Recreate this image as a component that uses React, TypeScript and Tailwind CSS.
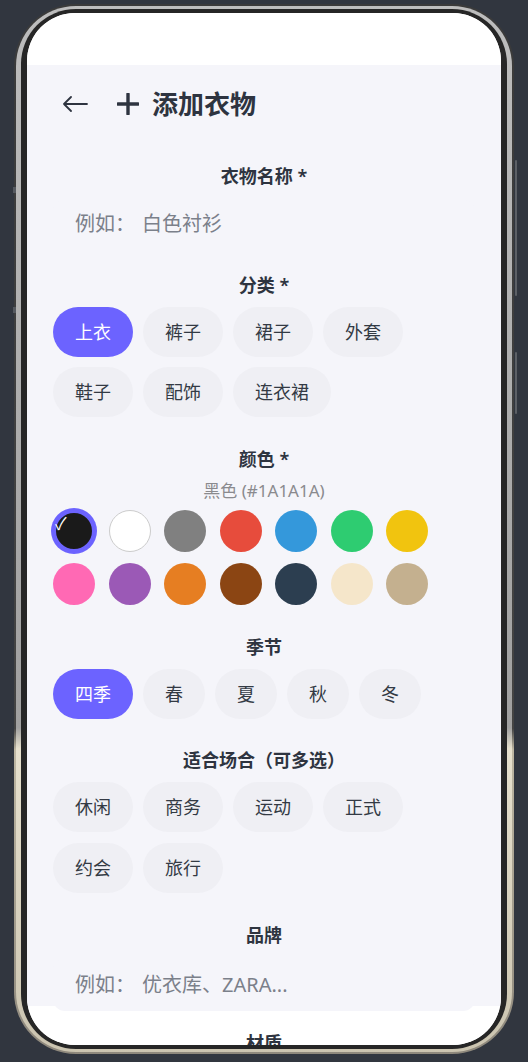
import { useState } from "react";

const CATEGORIES = ["上衣", "裤子", "裙子", "外套", "鞋子", "配饰", "连衣裙"];
const SEASONS = ["四季", "春", "夏", "秋", "冬"];
const OCCASIONS = ["休闲", "商务", "运动", "正式", "约会", "旅行"];

const COLORS = [
  { name: "黑色", hex: "#1A1A1A" },
  { name: "白色", hex: "#FFFFFF" },
  { name: "灰色", hex: "#808080" },
  { name: "红色", hex: "#E74C3C" },
  { name: "蓝色", hex: "#3498DB" },
  { name: "绿色", hex: "#2ECC71" },
  { name: "黄色", hex: "#F1C40F" },
  { name: "粉色", hex: "#FF69B4" },
  { name: "紫色", hex: "#9B59B6" },
  { name: "橙色", hex: "#E67E22" },
  { name: "棕色", hex: "#8B4513" },
  { name: "藏青", hex: "#2C3E50" },
  { name: "米色", hex: "#F5E6CA" },
  { name: "卡其", hex: "#C4B08F" },
];

function Chip({
  label,
  active,
  onClick,
}: {
  label: string;
  active: boolean;
  onClick: () => void;
}) {
  return (
    <button
      type="button"
      onClick={onClick}
      className={`h-[50px] px-[22px] rounded-full text-[18px] leading-[24px] ${
        active ? "bg-[#6c63ff] text-white" : "bg-[#efeff4] text-[#333a44]"
      }`}
    >
      {label}
    </button>
  );
}

function Label({ children, className = "" }: { children: React.ReactNode; className?: string }) {
  return (
    <div
      className={`h-[24px] text-center text-[18px] leading-[24px] font-semibold text-[#2e3440] ${className}`}
    >
      {children}
    </div>
  );
}

function Placeholder({ prefix, rest, className = "" }: { prefix: string; rest: string; className?: string }) {
  return (
    <div
      className={`flex items-center rounded-[12px] bg-[#f5f5fa] px-[22px] text-[20px] text-[#7b808a] ${className}`}
    >
      {prefix}
      <span className="mr-[7px]">：</span>
      {rest}
    </div>
  );
}

export default function App() {
  const [category, setCategory] = useState("上衣");
  const [season, setSeason] = useState("四季");
  const [occasions, setOccasions] = useState<string[]>([]);
  const [color, setColor] = useState(COLORS[0]);

  const toggleOccasion = (o: string) => {
    setOccasions((prev) =>
      prev.includes(o) ? prev.filter((x) => x !== o) : [...prev, o]
    );
  };

  return (
    <div className="relative min-h-[1062px] bg-[#31363f] pt-[4px] font-['Noto_Sans','Noto_Sans_CJK_SC',sans-serif]">
      <div className="relative mx-auto w-[500px]">
        {/* side buttons */}
        <div className="absolute -left-[1px] top-[183px] h-[6px] w-[3px] bg-[#55595f]" />
        <div className="absolute -left-[1px] top-[303px] h-[6px] w-[3px] bg-[#55595f]" />
        <div className="absolute -right-[3px] top-[156px] h-[136px] w-[2px] rounded-full bg-[#5c6066]" />
        <div className="absolute -right-[3px] top-[348px] h-[62px] w-[2px] rounded-full bg-[#5c6066]" />

        <div className="h-[1050px] rounded-[62px] bg-[linear-gradient(to_bottom,#3a3a3a_0%,#444444_69%,#bdb6a2_71%,#8e887c_100%)] p-[2px]">
          <div className="h-full rounded-[60px] bg-[linear-gradient(to_bottom,#bdbdbd_0%,#a0a0a0_69%,#e6e0cd_71%,#cbc4b0_100%)] px-[5px] py-[3px]">
            <div className="h-full rounded-[55px] bg-[#262626] px-[6px] py-[4px]">
              <div className="flex h-full flex-col overflow-hidden rounded-[48px] bg-white">
                {/* status bar */}
                <div className="h-[52px] shrink-0 bg-white" />

                <div className="bg-[#f5f5fa] px-[26px]">
                  {/* header */}
                  <div className="flex h-[78px] items-center">
                    <svg width="26" height="16" viewBox="0 0 26 16" className="ml-[9px]">
                      <path
                        d="M25 8H2M9 1L2 8l7 7"
                        fill="none"
                        stroke="#2e3440"
                        strokeWidth="1.8"
                        strokeLinecap="round"
                        strokeLinejoin="round"
                      />
                    </svg>
                    <svg width="22" height="22" viewBox="0 0 22 22" className="ml-[29px]">
                      <path
                        d="M11 1v20M1 11h20"
                        stroke="#2e3440"
                        strokeWidth="3.4"
                        strokeLinecap="round"
                      />
                    </svg>
                    <h1 className="ml-[13px] text-[26px] leading-[32px] font-bold text-[#2e3440]">
                      添加衣物
                    </h1>
                  </div>

                  <Label className="mt-[21px]">衣物名称 *</Label>
                  <Placeholder prefix="例如" rest="白色衬衫" className="mt-[12px] h-[48px]" />

                  <Label className="mt-[25px]">分类 *</Label>
                  <div className="mt-[10px] flex flex-wrap gap-[10px]">
                    {CATEGORIES.map((c) => (
                      <Chip key={c} label={c} active={category === c} onClick={() => setCategory(c)} />
                    ))}
                  </div>

                  <Label className="mt-[30px]">颜色 *</Label>
                  <div className="mt-[10px] h-[20px] text-center text-[17px] leading-[20px] text-[#8a8a8e]">
                    {color.name} ({color.hex})
                  </div>
                  <div className="mt-[9px] flex w-[385px] flex-wrap gap-x-[13.5px] gap-y-[11px]">
                    {COLORS.map((c) => {
                      const selected = c.hex === color.hex;
                      return (
                        <button
                          type="button"
                          key={c.hex}
                          onClick={() => setColor(c)}
                          className={`relative h-[42px] w-[42px] rounded-full ${
                            selected
                              ? "border-[3px] border-[#6c63ff] ring-[2px] ring-[#6c63ff]"
                              : c.hex === "#FFFFFF"
                                ? "border border-[#cccccc]"
                                : ""
                          }`}
                          style={{ backgroundColor: c.hex }}
                        >
                          {selected && (
                            <span className="absolute -left-[1px] top-[1px] text-[17px] leading-[20px] text-white">
                              ✓
                            </span>
                          )}
                        </button>
                      );
                    })}
                  </div>

                  <Label className="mt-[30px]">季节</Label>
                  <div className="mt-[10px] flex flex-wrap gap-[10px]">
                    {SEASONS.map((s) => (
                      <Chip key={s} label={s} active={season === s} onClick={() => setSeason(s)} />
                    ))}
                  </div>

                  <Label className="mt-[29px]">适合场合（可多选）</Label>
                  <div className="mt-[10px] flex flex-wrap gap-x-[10px] gap-y-[11px]">
                    {OCCASIONS.map((o) => (
                      <Chip
                        key={o}
                        label={o}
                        active={occasions.includes(o)}
                        onClick={() => toggleOccasion(o)}
                      />
                    ))}
                  </div>

                  <Label className="mt-[30px]">品牌</Label>
                  <Placeholder
                    prefix="例如"
                    rest="优衣库、ZARA..."
                    className="relative z-10 -mb-[5px] mt-[12px] h-[52px]"
                  />
                </div>

                <div className="flex-1 bg-white px-[26px] pt-[25px]">
                  <Label>材质</Label>
                </div>
              </div>
            </div>
          </div>
        </div>
      </div>
    </div>
  );
}
